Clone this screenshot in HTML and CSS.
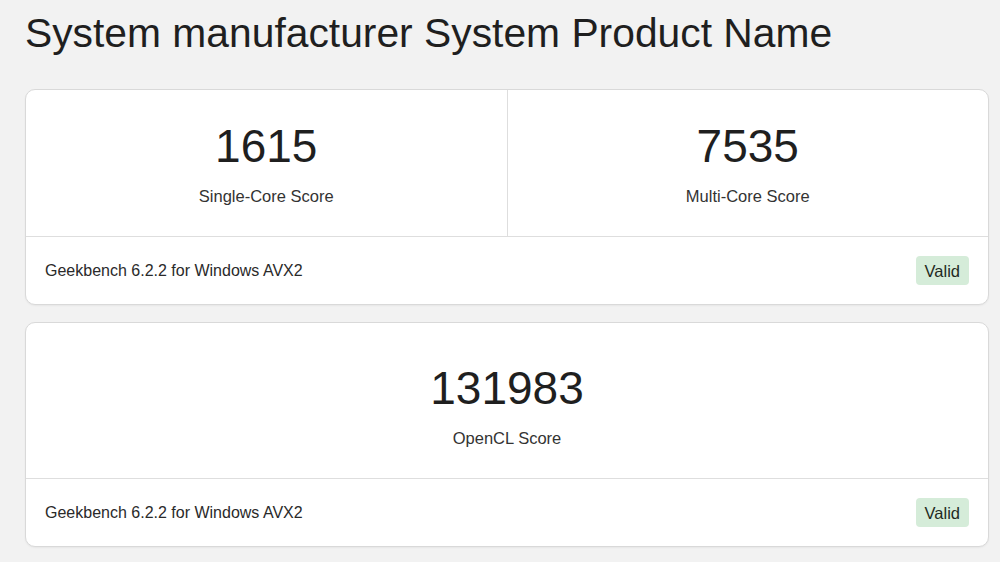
FILE: index.html
```html
<!DOCTYPE html>
<html lang="en">
<head>
    <meta charset="UTF-8">
    <meta name="viewport" content="width=device-width, initial-scale=1.0">
    <title>System manufacturer System Product Name - Geekbench</title>
    <link rel="stylesheet" href="styles.css">
</head>
<body>
    <div class="page">
        <h1 class="device-name">System manufacturer System Product Name</h1>

        <div class="card">
            <div class="scores">
                <div class="score">
                    <div class="score-value">1615</div>
                    <div class="score-label">Single-Core Score</div>
                </div>
                <div class="score">
                    <div class="score-value">7535</div>
                    <div class="score-label">Multi-Core Score</div>
                </div>
            </div>
            <div class="card-footer">
                <span class="version">Geekbench 6.2.2 for Windows AVX2</span>
                <span class="badge">Valid</span>
            </div>
        </div>

        <div class="card">
            <div class="scores">
                <div class="score score-single">
                    <div class="score-value">131983</div>
                    <div class="score-label">OpenCL Score</div>
                </div>
            </div>
            <div class="card-footer">
                <span class="version">Geekbench 6.2.2 for Windows AVX2</span>
                <span class="badge">Valid</span>
            </div>
        </div>
    </div>
</body>
</html>
```

FILE: styles.css
```css
body {
    margin: 0;
    background: #f2f2f2;
    font-family: "Liberation Sans", Arial, sans-serif;
    color: #222;
}
.page {
    padding: 0 11px 0 25px;
}
.device-name {
    font-size: 40.8px;
    font-weight: normal;
    line-height: 46px;
    margin: 0;
    padding: 10px 0 33px;
    color: #1f1f1f;
}
.card {
    background: #fff;
    border: 1px solid #d9d9d9;
    border-radius: 10px;
    margin-bottom: 17px;
    box-shadow: 0 1px 2px rgba(0, 0, 0, 0.05);
}
.scores {
    display: flex;
    border-bottom: 1px solid #dedede;
}
.score {
    flex: 1;
    text-align: center;
    padding: 29px 0 30px;
}
.score + .score {
    border-left: 1px solid #dedede;
}
.score-single {
    padding-top: 38px;
}
.score-value {
    font-size: 46px;
    line-height: 54px;
    color: #1f1f1f;
}
.score-label {
    font-size: 16.5px;
    line-height: 20px;
    margin-top: 13px;
    color: #333;
}
.card-footer {
    display: flex;
    align-items: center;
    justify-content: space-between;
    height: 67px;
    padding: 0 19px 0 19px;
}
.version {
    font-size: 16px;
    color: #2a2a2a;
}
.badge {
    background: #d5ecd9;
    color: #1f2a22;
    font-size: 16.5px;
    line-height: 20px;
    padding: 5px 9px 4px;
    border-radius: 4px;
}
```
